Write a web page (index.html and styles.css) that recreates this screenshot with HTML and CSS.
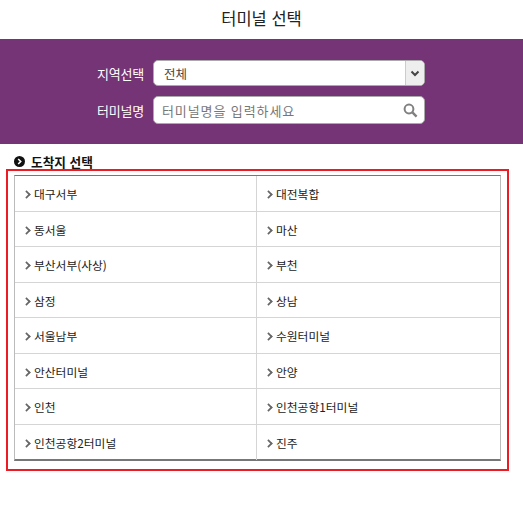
FILE: index.html
```html
<!DOCTYPE html>
<html lang="ko">
<head>
    <title>터미널 선택</title>
    <link rel="stylesheet" href="styles.css">
</head>
<body>
    <h1 class="page-title">터미널 선택</h1>
    <div class="search-box">
        <div class="search-row">
            <span class="search-label">지역선택</span>
            <div class="field select-field">
                <span class="select-value">전체</span>
                <span class="select-btn">
                    <svg width="10" height="7" viewBox="0 0 10 7"><path d="M1.5 1.5 L5 5 L8.5 1.5" fill="none" stroke="#444" stroke-width="2"/></svg>
                </span>
            </div>
        </div>
        <div class="search-row">
            <span class="search-label">터미널명</span>
            <div class="field input-field">
                <span class="placeholder">터미널명을 입력하세요</span>
                <svg width="15" height="15" viewBox="0 0 15 15"><circle cx="6" cy="6" r="4.4" fill="none" stroke="#808080" stroke-width="2"/><path d="M9.4 9.4 L13.6 13.6" stroke="#808080" stroke-width="2.4"/></svg>
            </div>
        </div>
    </div>
    <h2 class="section-title">
        <svg width="11" height="11" viewBox="0 0 11 11"><circle cx="5.5" cy="5.5" r="5.5" fill="#111"/><path d="M4.2 3 L6.7 5.5 L4.2 8" fill="none" stroke="#fff" stroke-width="1.6"/></svg>
        도착지 선택
    </h2>
    <div class="result-box">
        <ul class="terminal-list">
            <li>대구서부</li>
            <li>대전복합</li>
            <li>동서울</li>
            <li>마산</li>
            <li>부산서부(사상)</li>
            <li>부천</li>
            <li>삼정</li>
            <li>상남</li>
            <li>서울남부</li>
            <li>수원터미널</li>
            <li>안산터미널</li>
            <li>안양</li>
            <li>인천</li>
            <li>인천공항1터미널</li>
            <li>인천공항2터미널</li>
            <li>진주</li>
        </ul>
    </div>
</body>
</html>
```

FILE: styles.css
```css
* {
    box-sizing: border-box;
}
body {
    margin: 0;
    background-color: #fff;
    color: #222;
    font-family: "Noto Sans CJK KR", "Noto Sans", sans-serif;
}
.page-title {
    height: 39px;
    margin: 0;
    font-size: 16.5px;
    font-weight: 400;
    line-height: 36px;
    text-align: center;
}
.search-box {
    display: flex;
    flex-direction: column;
    gap: 10px;
    height: 105px;
    padding: 21px 98px 0 0;
    background-color: #753476;
}
.search-row {
    display: flex;
    justify-content: flex-end;
    align-items: center;
    gap: 9px;
}
.search-label {
    color: #fff;
    font-size: 13px;
    letter-spacing: -0.2px;
}
.field {
    display: flex;
    align-items: center;
    width: 272px;
    background-color: #fff;
    border: 1px solid #aaa;
    border-radius: 5px;
}
.select-field {
    height: 26px;
}
.select-value {
    flex: 1;
    padding-left: 10px;
    color: #444;
    font-size: 12.5px;
}
.select-btn {
    display: flex;
    justify-content: center;
    align-items: center;
    width: 19px;
    height: 100%;
    background-color: #eee;
    border-left: 1px solid #ccc;
    border-radius: 0 4px 4px 0;
}
.input-field {
    justify-content: space-between;
    height: 28px;
    padding: 0 6px 0 8px;
}
.placeholder {
    color: #777;
    font-size: 13px;
    letter-spacing: 0.9px;
}
.section-title {
    display: flex;
    align-items: center;
    gap: 6px;
    height: 25px;
    margin: 0;
    padding: 9px 0 0 14px;
    color: #111;
    font-size: 12.7px;
    font-weight: 700;
}
.result-box {
    width: 503px;
    height: 302px;
    margin-left: 6px;
    padding: 4px 6px 0 6px;
    border: 2px solid #ed1c24;
}
.terminal-list {
    display: grid;
    grid-template-columns: 242px 1fr;
    grid-auto-rows: 35.5px;
    width: 487px;
    height: 286px;
    margin: 0;
    padding: 0;
    list-style: none;
    border: 1px solid #bbb;
    border-top-color: #777;
    border-bottom: 2px solid #777;
}
.terminal-list li {
    padding-left: 19px;
    position: relative;
    font-size: 11.75px;
    line-height: 36px;
    border-bottom: 1px solid #d5d5d5;
}
.terminal-list li:nth-child(odd) {
    border-right: 1px solid #d5d5d5;
}
.terminal-list li:nth-last-child(-n+2) {
    border-bottom: none;
}
.terminal-list li::before {
    content: "";
    position: absolute;
    left: 8px;
    top: 15px;
    width: 5px;
    height: 5px;
    border-top: 2px solid #666;
    border-right: 2px solid #666;
    transform: rotate(45deg) scale(0.85);
}
```
